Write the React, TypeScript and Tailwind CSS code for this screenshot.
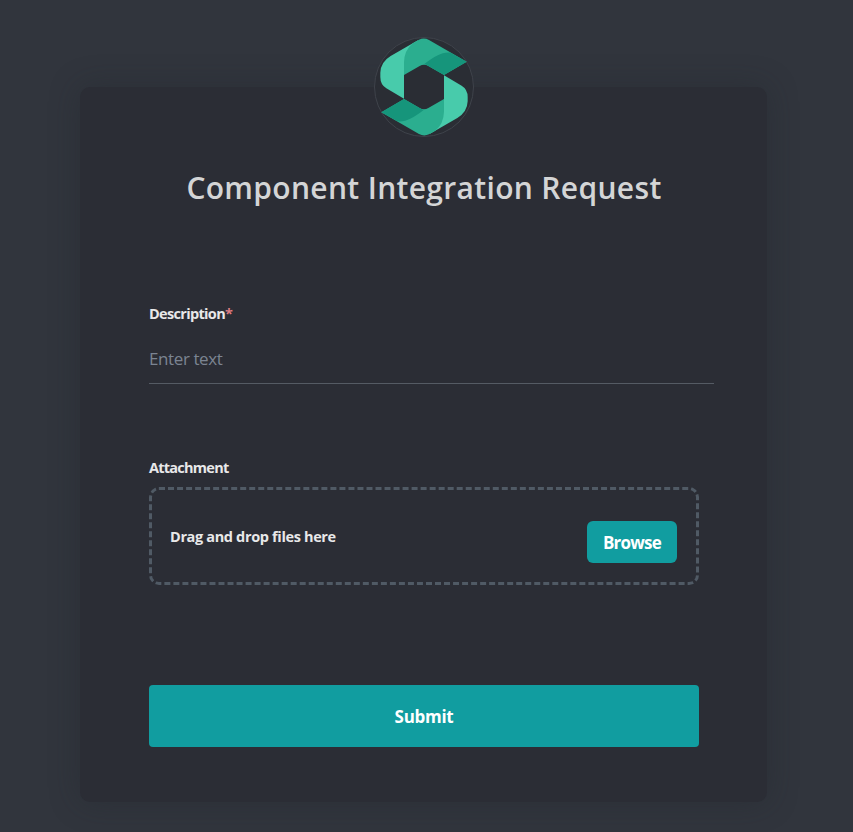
function Logo() {
  return (
    <svg viewBox="30 30 300 300" className="h-[100px] w-[100px]" aria-hidden="true">
      <circle cx="180" cy="180" r="148.5" fill="#2a2d34" stroke="#3f434b" strokeWidth="3" />
      <path d="M120 215 L67 184 Q49 173 49 150 L49 137 Q50 105 80 87 L162 40 L165 100 L120 142 Z" fill="#48cbab" />
      <path d="M120 142 L120 106 Q121 70 146 49 L165 38 Q180 31 195 39 L308 104 L240 144 L193 117 Q180 109 167 117 L120 144 Z" fill="#2bae8f" />
      <path d="M181 111 C215 86 235 74 260 77 L308 104 L240 144 L193 117 Q187 112 181 111 Z" fill="#16957b" />
      <path d="M240 145 L293 176 Q311 187 311 210 L311 223 Q310 255 280 273 L198 320 L195 260 L240 218 Z" fill="#48cbab" />
      <path d="M240 216 L240 254 Q239 290 214 311 L195 322 Q180 329 165 321 L52 256 L120 216 L167 243 Q180 251 193 243 Z" fill="#2bae8f" />
      <path d="M179 249 C145 274 125 286 100 283 L52 256 L120 216 L167 243 Q173 248 179 249 Z" fill="#16957b" />
    </svg>
  );
}

export default function App() {
  return (
    <main className="h-[832px] w-[853px] overflow-hidden bg-[#31353d] pt-[87px] pl-20 font-['Segoe_UI','Open_Sans','Noto_Sans',sans-serif] text-[#e8e8e9]">
      <form
        className="relative flex h-[715px] w-[687px] flex-col rounded-[10px] bg-[#2b2d35] pr-[53px] pl-[69px] shadow-[0_0_30px_rgba(32,36,44,0.35)]"
        onSubmit={(event) => event.preventDefault()}
      >
        <div className="absolute -top-[50px] left-[294px]">
          <Logo />
        </div>
        <h1 className="mt-[79px] h-11 w-[550px] text-center text-[30px] leading-[44px] font-semibold tracking-[0.33px] whitespace-nowrap text-[#d4d5d6]">
          Component Integration Request
        </h1>

        <label htmlFor="description" className="mt-[92px] h-6 text-[14.5px] leading-6 font-bold tracking-[-0.67px]">
          Description<span className="text-[#dc7b80]">*</span>
        </label>
        <input
          id="description"
          placeholder="Enter text"
          className="mt-2 h-[50px] w-[565px] border-b border-[#555b64] bg-transparent text-[17px] tracking-[-0.4px] outline-none placeholder:text-[#7b8492]"
        />

        <div className="mt-[72px] h-6 text-[14.5px] leading-6 font-bold tracking-[-0.75px]">Attachment</div>
        <div className="mt-[7px] flex h-[98px] w-[550px] items-center justify-between rounded-[10px] border-[3px] border-dashed border-[#505a65] pr-[19px] pl-[18px]">
          <span className="pt-0.5 text-[14.5px] font-bold tracking-[-0.35px]">Drag and drop files here</span>
          <button type="button" className="mt-3 h-[42px] w-[90px] rounded-md bg-[#119da0] pt-0.5 text-[17px] font-bold tracking-[-0.75px] text-white">
            Browse
          </button>
        </div>

        <button type="submit" className="mt-[100px] h-[62px] w-[550px] rounded bg-[#119da0] pt-0.5 text-[17px] font-bold tracking-[-0.3px] text-white">
          Submit
        </button>
      </form>
    </main>
  );
}
